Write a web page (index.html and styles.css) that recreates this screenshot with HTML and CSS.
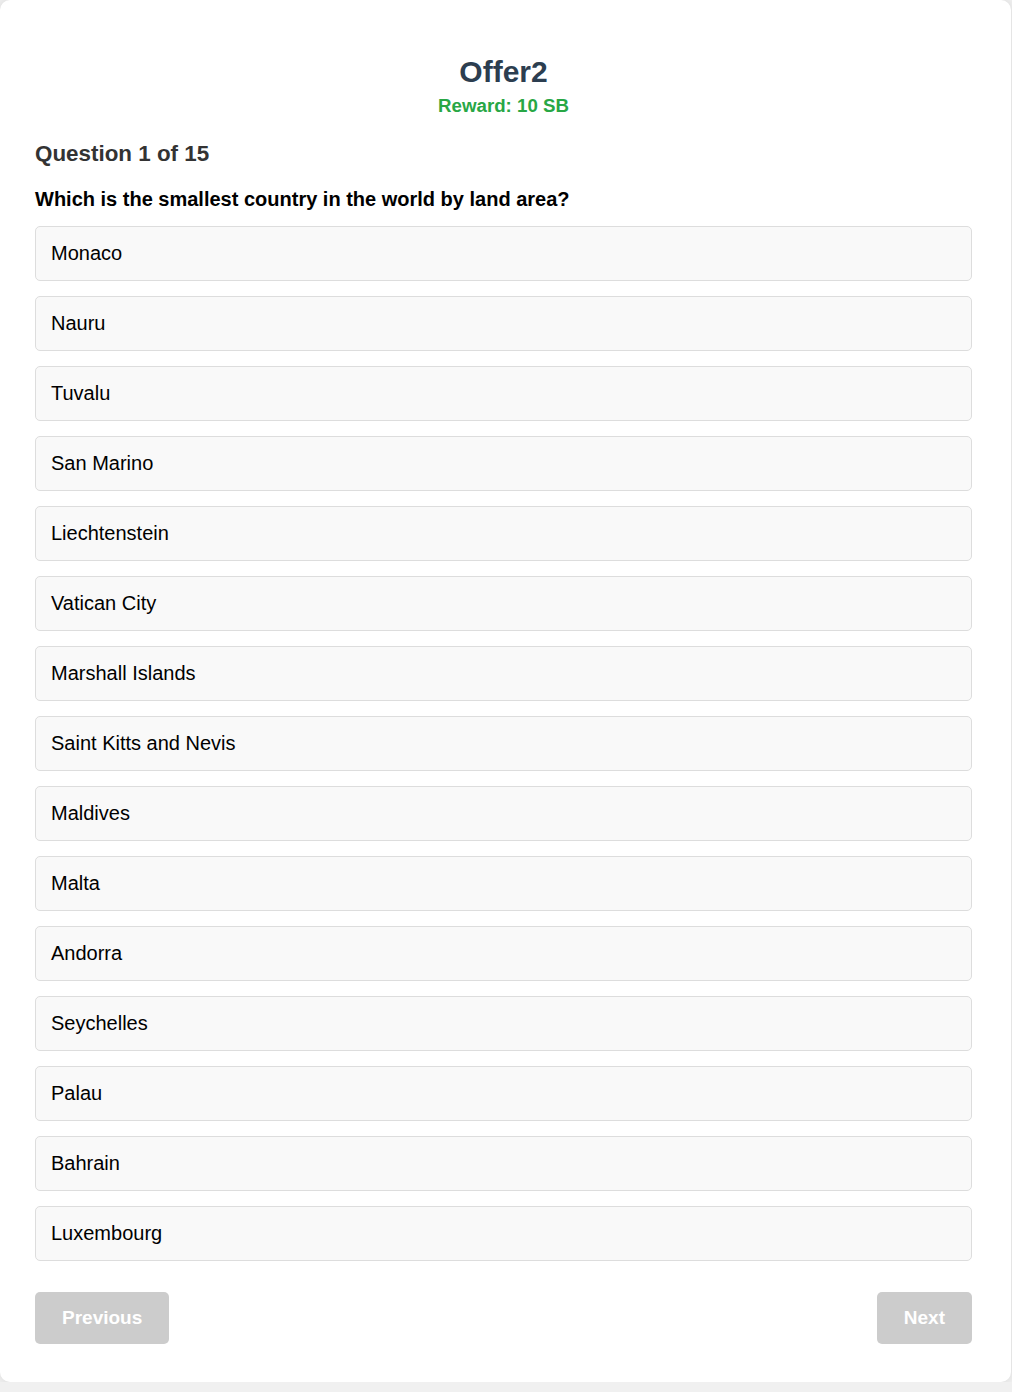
FILE: index.html
```html
<!DOCTYPE html>
<html>
<head>
<meta charset="utf-8">
<link rel="stylesheet" href="styles.css">
</head>
<body>
<div class="card">
  <div class="header">
    <h1 class="title">Offer2</h1>
    <div class="reward">Reward: 10 SB</div>
  </div>
  <h2 class="qnum">Question 1 of 15</h2>
  <p class="qtext">Which is the smallest country in the world by land area?</p>
  <div class="options">
    <div class="option">Monaco</div>
    <div class="option">Nauru</div>
    <div class="option">Tuvalu</div>
    <div class="option">San Marino</div>
    <div class="option">Liechtenstein</div>
    <div class="option">Vatican City</div>
    <div class="option">Marshall Islands</div>
    <div class="option">Saint Kitts and Nevis</div>
    <div class="option">Maldives</div>
    <div class="option">Malta</div>
    <div class="option">Andorra</div>
    <div class="option">Seychelles</div>
    <div class="option">Palau</div>
    <div class="option">Bahrain</div>
    <div class="option">Luxembourg</div>
  </div>
  <div class="nav">
    <button class="btn" disabled>Previous</button>
    <button class="btn" disabled>Next</button>
  </div>
</div>
</body>
</html>
```
FILE: styles.css
```css
html, body {
  margin: 0;
  padding: 0;
  background: #f0f0f0;
  font-family: "Liberation Sans", Arial, sans-serif;
}
.card {
  width: 1011px;
  height: 1382px;
  box-sizing: border-box;
  background: #fff;
  border-radius: 10px;
  box-shadow: 0 0 10px rgba(0, 0, 0, 0.1);
  padding: 55px 39px 0 35px;
}
.header {
  text-align: center;
}
.title {
  margin: 0;
  font-size: 30px;
  font-weight: bold;
  color: #2c3e50;
}
.reward {
  margin-top: 6px;
  font-size: 18.7px;
  font-weight: bold;
  color: #28a745;
}
.qnum {
  margin: 24px 0 0;
  font-size: 22.4px;
  font-weight: bold;
  color: #333;
}
.qtext {
  margin: 21px 0 0;
  font-size: 20px;
  font-weight: bold;
  color: #000;
}
.options {
  margin-top: 15px;
  display: flex;
  flex-direction: column;
  gap: 15px;
}
.option {
  height: 55px;
  box-sizing: border-box;
  border: 1px solid #ddd;
  border-radius: 5px;
  background: #f9f9f9;
  padding: 0 15px;
  display: flex;
  align-items: center;
  font-size: 20px;
  color: #000;
}
.nav {
  margin-top: 31px;
  display: flex;
  justify-content: space-between;
}
.btn {
  height: 52px;
  padding: 0 27px;
  border: none;
  border-radius: 5px;
  background: #ccc;
  color: #fff;
  font-family: "Liberation Sans", Arial, sans-serif;
  font-size: 19px;
  font-weight: bold;
}
```
